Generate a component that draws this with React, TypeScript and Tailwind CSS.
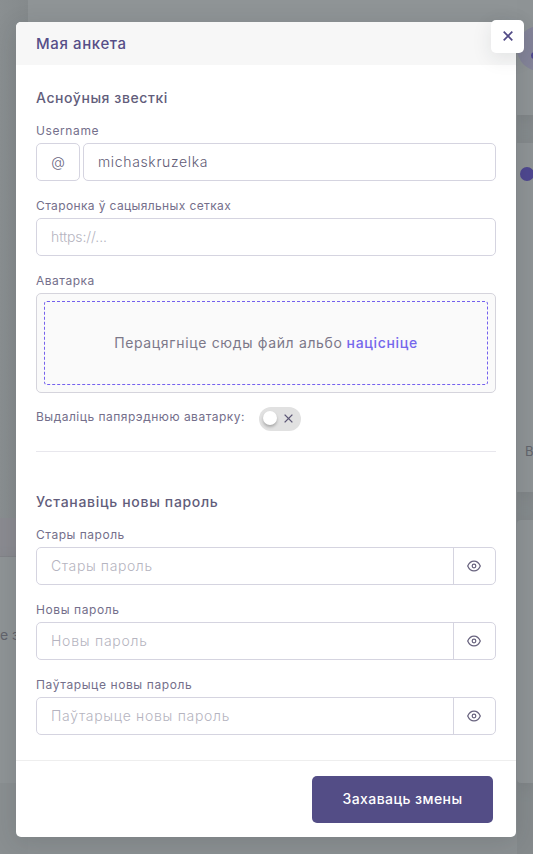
import type { ReactNode } from "react";

const fieldBox = "h-[38px] rounded-[5px] border border-[#d5d4e0] bg-white";
const labelText = "block h-[18px] whitespace-nowrap text-[12px] leading-[18px] text-[#746f8b]";

function CrossIcon({ size, width }: { size: number; width: number }) {
  return (
    <svg width={size} height={size} viewBox="0 0 10 10" fill="none" stroke="currentColor" strokeWidth={width}>
      <path d="M.7.7l8.6 8.6M9.3.7L.7 9.3" />
    </svg>
  );
}

function EyeIcon() {
  return (
    <svg width="14" height="12" viewBox="0 0 14 12" fill="none" stroke="#69647f" strokeWidth="1.25">
      <path d="M.7 6C2 3 4.2 1.1 7 1.1S12 3 13.3 6C12 9 9.800 10.900 7 10.900S2 9 .7 6Z" />
      <circle cx="7" cy="6" r="1.800" />
    </svg>
  );
}

function Field({ label, tracking, children }: { label: string; tracking: string; children: ReactNode }) {
  return (
    <div className="mb-[16px]">
      <label className={`${labelText} ${tracking} mb-[3px]`}>{label}</label>
      {children}
    </div>
  );
}

function PasswordField({ label, labelTracking, tracking }: { label: string; labelTracking: string; tracking: string }) {
  return (
    <Field label={label} tracking={labelTracking}>
      <div className={`${fieldBox} flex overflow-hidden`}>
        <input
          type="text"
          placeholder={label}
          className={`min-w-0 flex-1 pb-[2px] pl-[14px] text-[14px] font-light outline-none placeholder:text-[#b5b4c0] ${tracking}`}
        />
        <button className="flex w-[42px] items-center justify-center border-l border-[#d5d4e0] pr-[2px]">
          <EyeIcon />
        </button>
      </div>
    </Field>
  );
}

function PageBehind() {
  return (
    <div className="absolute inset-0 flex justify-between bg-[#8b9092]">
      <div className="flex w-[28px] flex-col bg-linear-to-r from-[#8a8f91] to-[#858a8c]">
        <div className="h-[518px]" />
        <div className="h-[39px] border-b border-[#838489] bg-[#8b8b91]" />
        <div className="h-[226px] bg-[#8f9496] pt-[68px] text-[14px] leading-[20px] whitespace-nowrap text-[#62636c] shadow-[0_5px_14px_#7e8385]">
          е з
        </div>
        <div className="flex-1 bg-[#8a8f91]" />
      </div>
      <div className="h-[22px] flex-1 bg-[#8f9496]" />
      <div className="flex w-[16px] flex-col gap-[28px] overflow-hidden bg-[#858a8c]">
        <div className="h-[115px] shrink-0 bg-[#8e9395] pt-[26px] shadow-[0_5px_12px_#7e8385]">
          <div className="flex h-[45px] w-[45px] items-center rounded-full bg-[#85859a] pt-[14px] pl-[14px]">
            <div className="h-[7px] w-[7px] rounded-full bg-[#4d4690]" />
          </div>
        </div>
        <div className="h-[349px] shrink-0 bg-[#8e9395] pt-[24px] pl-[3px] shadow-[0_5px_12px_#7e8385]">
          <div className="h-[14px] w-[14px] rounded-full bg-[#4e478f]" />
          <div className="mt-[261px] pl-[5px] text-[13px] leading-[18px] text-[#62646c]">В</div>
        </div>
        <div className="h-[263px] shrink-0 rounded-l-[4px] bg-[#8e9395] shadow-[0_5px_12px_#7e8385]" />
      </div>
    </div>
  );
}

export default function App() {
  return (
    <div className="relative h-[854px] w-[533px] overflow-hidden font-['Inter','Noto_Sans',sans-serif]">
      <PageBehind />
      <div className="absolute top-[22px] left-[16px] flex h-[815px] w-[500px] flex-col rounded-[5px] bg-white shadow-[0_5px_25px_rgba(34,41,47,0.15)]">
        <header className="flex h-[43px] shrink-0 items-center rounded-t-[5px] bg-[#f7f7f7] px-[20px] pt-[2px]">
          <h1 className="text-[15px] font-medium whitespace-nowrap text-[#564e88] tracking-[0.6px]">Мая анкета</h1>
        </header>
        <button className="absolute top-[-2px] right-[-8px] flex h-[33px] w-[33px] items-center justify-center rounded-[5px] bg-white pb-px text-[#514a86] shadow-[0_5px_20px_rgba(34,41,47,0.1)]">
          <CrossIcon size={10} width={1.7} />
        </button>

        <main className="flex-1 px-[20px] pt-[22px]">
          <h2 className="mb-[14px] h-[21px] text-[14px] leading-[21px] font-medium whitespace-nowrap text-[#625d7b] tracking-[0.57px]">
            Асноўныя звесткі
          </h2>
          <Field label="Username" tracking="tracking-[0.6px]">
            <div className="flex gap-[3px]">
              <span className={`${fieldBox} flex w-[44px] items-center justify-center pb-[2px] text-[14px] font-light text-[#696580]`}>@</span>
              <input
                defaultValue="michaskruzelka"
                className={`${fieldBox} min-w-0 flex-1 pb-[2px] pl-[14px] text-[14px] font-light text-[#5f5b75] outline-none tracking-[0.65px]`}
              />
            </div>
          </Field>
          <Field label="Старонка ў сацыяльных сетках" tracking="tracking-[0.37px]">
            <input
              placeholder="https://..."
              className={`${fieldBox} block w-full pb-[2px] pl-[14px] text-[14px] font-light outline-none placeholder:text-[#b5b4c0] tracking-[-0.1px]`}
            />
          </Field>
          <label className={`${labelText} mb-[3px] tracking-[0.5px]`}>Аватарка</label>
          <div className="h-[100px] rounded-[5px] border border-[#d5d4dc] bg-[#fafafa] p-[7px]">
            <div className="flex h-full items-center justify-center gap-[4px] rounded-[3px] border border-dashed border-[#7460ee] pb-px text-[14px] whitespace-nowrap text-[#7c7889]">
              <span className="tracking-[0.65px]">Перацягніце сюды файл альбо</span>
              <span className="font-medium tracking-[0.65px] text-[#7567ec]">націсніце</span>
            </div>
          </div>
          <div className="mt-[14px] flex h-[24px]">
            <span className={`${labelText} mt-px w-[223px] tracking-[0.5px]`}>Выдаліць папярэднюю аватарку:</span>
            <button className="flex h-[24px] w-[42px] items-center justify-between rounded-full bg-[#e1e1e1] pr-[8px] pb-px pl-[4px] text-[#5b5674]">
              <span className="mb-px h-[14px] w-[14px] rounded-full bg-white shadow-[0_2px_3px_rgba(0,0,0,0.25)]" />
              <CrossIcon size={9} width={1.5} />
            </button>
          </div>
          <hr className="mt-[20px] border-[#e8e7ed]" />
          <h2 className="mt-[39px] mb-[14px] h-[21px] text-[14px] leading-[21px] font-medium whitespace-nowrap text-[#625d7b] tracking-[0.68px]">
            Устанавіць новы пароль
          </h2>
          <PasswordField label="Стары пароль" labelTracking="tracking-[0.52px]" tracking="tracking-[0.6px]" />
          <PasswordField label="Новы пароль" labelTracking="tracking-[0.6px]" tracking="tracking-[0.75px]" />
          <PasswordField label="Паўтарыце новы пароль" labelTracking="tracking-[0.6px]" tracking="tracking-[0.7px]" />
        </main>
        <footer className="flex h-[77px] shrink-0 justify-end border-t border-[#eeeeee] pt-[15px] pr-[23px]">
          <button className="h-[47px] w-[181px] rounded-[5px] bg-[#534d86] pb-[2px] text-[14px] font-medium whitespace-nowrap text-white tracking-[0.42px]">
            Захаваць змены
          </button>
        </footer>
      </div>
    </div>
  );
}
